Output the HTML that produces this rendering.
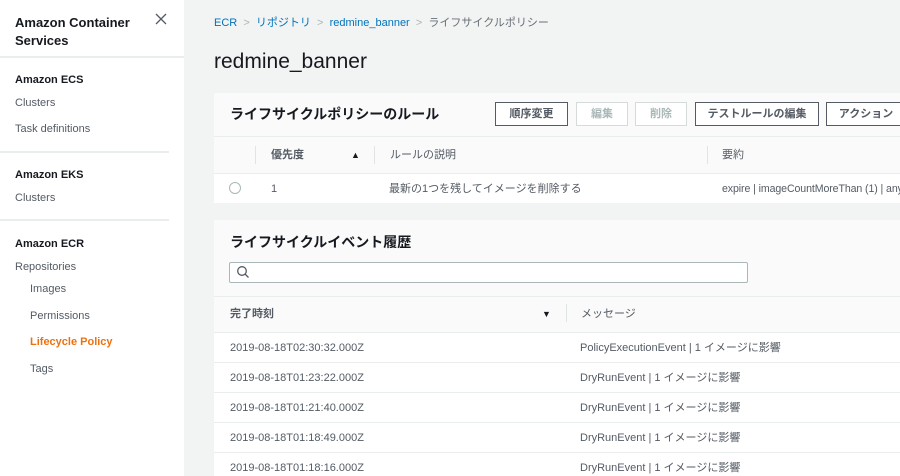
<!DOCTYPE html>
<html><head><meta charset="utf-8"><style>
*{margin:0;padding:0;box-sizing:border-box}
html{overflow:hidden;width:900px;height:476px}
body{width:900px;height:476px;overflow:hidden;background:#f2f3f3;font-family:"Liberation Sans","Noto Sans CJK JP",sans-serif;color:#16191f;position:relative;font-size:11px}
.a{position:absolute;white-space:nowrap;line-height:14px}
#side{position:absolute;left:0;top:0;width:184px;height:476px;background:#fff}
.hr{position:absolute;left:0;height:2px;background:#eaeded}
.lk{color:#0073bb}
.btn{position:absolute;top:102px;height:24px;border:1px solid #545b64;background:#fff;font-size:11px;font-weight:bold;text-align:center;line-height:22px;color:#545b64}
.dis{border-color:#d5dbdb;color:#aab7b8}
.sep{position:absolute;width:1px;background:#e1e4e4}
.row{position:absolute;left:214px;width:686px;background:#fff;border-top:1px solid #eaeded;height:30px;overflow:hidden}
.row span{position:absolute;top:8px;color:#545b64;font-size:11px;line-height:14px;white-space:nowrap}
</style></head><body>
<div id="side">
<div class="a" style="left:15px;top:14px;font-size:13px;font-weight:bold;line-height:18px">Amazon Container<br>Services</div>
<svg class="a" style="left:155px;top:13px" width="12" height="12"><path d="M1 1L11 11M11 1L1 11" stroke="#545b64" stroke-width="1.3"/></svg>
<div class="hr" style="top:56px;width:184px"></div>
<div class="a" style="left:15px;top:73px;font-weight:bold">Amazon ECS</div>
<div class="a" style="left:15px;top:96px;color:#545b64">Clusters</div>
<div class="a" style="left:15px;top:122px;color:#545b64">Task definitions</div>
<div class="hr" style="top:151px;width:169px"></div>
<div class="a" style="left:15px;top:168px;font-weight:bold">Amazon EKS</div>
<div class="a" style="left:15px;top:191px;color:#545b64">Clusters</div>
<div class="hr" style="top:219px;width:169px"></div>
<div class="a" style="left:15px;top:237px;font-weight:bold">Amazon ECR</div>
<div class="a" style="left:15px;top:260px;color:#545b64">Repositories</div>
<div class="a" style="left:30px;top:282px;color:#545b64">Images</div>
<div class="a" style="left:30px;top:309px;color:#545b64">Permissions</div>
<div class="a" style="left:30px;top:335px;color:#ec7211;font-weight:bold">Lifecycle Policy</div>
<div class="a" style="left:30px;top:362px;color:#545b64">Tags</div>
</div>
<div class="a" style="left:214px;top:16px;font-size:11px;color:#687078"><span class="lk">ECR</span> &nbsp;<span style="color:#aab7b8">&gt;</span>&nbsp; <span class="lk">リポジトリ</span> &nbsp;<span style="color:#aab7b8">&gt;</span>&nbsp; <span class="lk">redmine_banner</span> &nbsp;<span style="color:#aab7b8">&gt;</span>&nbsp; ライフサイクルポリシー</div>
<div class="a" style="left:214px;top:50px;font-size:21px;line-height:24px">redmine_banner</div>
<div class="a" style="left:214px;top:93px;width:686px;height:44px;background:#fafafa;border-bottom:1px solid #eaeded"></div>
<div class="a" style="left:230px;top:106px;font-size:14px;font-weight:bold;line-height:16px">ライフサイクルポリシーのルール</div>
<div class="btn" style="left:495px;width:73px">順序変更</div>
<div class="btn dis" style="left:576px;width:52px">編集</div>
<div class="btn dis" style="left:635px;width:52px">削除</div>
<div class="btn" style="left:695px;width:124px">テストルールの編集</div>
<div class="btn" style="left:826px;width:80px">アクション</div>
<div class="a" style="left:214px;top:137px;width:686px;height:36px;background:#fafafa"></div>
<div class="sep" style="left:255px;top:146px;height:18px"></div>
<div class="sep" style="left:374px;top:146px;height:18px"></div>
<div class="sep" style="left:707px;top:146px;height:18px"></div>
<div class="a" style="left:271px;top:148px;font-weight:bold;color:#545b64">優先度</div>
<div class="a" style="left:351px;top:148px;font-size:9px;color:#16191f">▲</div>
<div class="a" style="left:390px;top:148px;color:#545b64">ルールの説明</div>
<div class="a" style="left:722px;top:148px;color:#545b64">要約</div>
<div class="row" style="top:173px"><span style="left:15px;top:8px;width:12px;height:12px;border:1px solid #aab7b8;border-radius:50%"></span><span style="left:57px">1</span><span style="left:175px">最新の1つを残してイメージを削除する</span><span style="left:508px;font-size:10.6px;letter-spacing:-0.1px">expire | imageCountMoreThan (1) | any</span></div>
<div class="a" style="left:214px;top:220px;width:686px;height:112px;background:#fafafa"></div>
<div class="a" style="left:230px;top:234px;font-size:14px;font-weight:bold;line-height:16px">ライフサイクルイベント履歴</div>
<div class="a" style="left:229px;top:262px;width:519px;height:21px;background:#fff;border:1px solid #aab7b8;border-radius:2px"></div>
<svg class="a" style="left:236px;top:265px" width="14" height="14"><circle cx="6" cy="6" r="4.3" fill="none" stroke="#545b64" stroke-width="1.3"/><path d="M9 9L12.5 12.5" stroke="#545b64" stroke-width="1.3"/></svg>
<div class="a" style="left:214px;top:296px;width:686px;height:1px;background:#eaeded"></div>
<div class="sep" style="left:566px;top:304px;height:18px"></div>
<div class="a" style="left:230px;top:307px;font-weight:bold;color:#545b64">完了時刻</div>
<div class="a" style="left:542px;top:307px;font-size:9px">▼</div>
<div class="a" style="left:581px;top:307px;color:#545b64">メッセージ</div>
<div class="row" style="top:332px"><span style="left:16px">2019-08-18T02:30:32.000Z</span><span style="left:366px">PolicyExecutionEvent | 1 イメージに影響</span></div>
<div class="row" style="top:362px"><span style="left:16px">2019-08-18T01:23:22.000Z</span><span style="left:366px">DryRunEvent | 1 イメージに影響</span></div>
<div class="row" style="top:392px"><span style="left:16px">2019-08-18T01:21:40.000Z</span><span style="left:366px">DryRunEvent | 1 イメージに影響</span></div>
<div class="row" style="top:422px"><span style="left:16px">2019-08-18T01:18:49.000Z</span><span style="left:366px">DryRunEvent | 1 イメージに影響</span></div>
<div class="row" style="top:452px;height:24px"><span style="left:16px">2019-08-18T01:18:16.000Z</span><span style="left:366px">DryRunEvent | 1 イメージに影響</span></div>
</body></html>
